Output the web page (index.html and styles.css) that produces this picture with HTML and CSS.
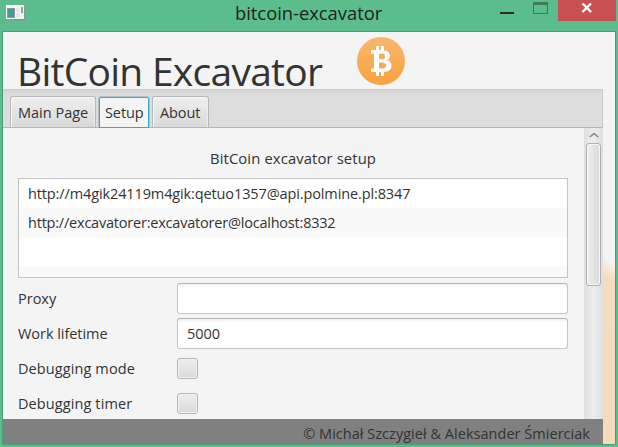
FILE: index.html
```html
<!DOCTYPE html>
<html lang="en">
<head>
<meta charset="utf-8">
<title>bitcoin-excavator</title>
<link rel="stylesheet" href="styles.css">
</head>
<body>
<div class="window">
  <header class="titlebar">
    <svg class="app-icon" width="19" height="16" viewBox="0 0 19 16">
      <rect x="0" y="1" width="19" height="14.500" fill="#7d9c8c"/>
      <rect x="0" y="0" width="18" height="14" fill="#f4f6f4"/>
      <rect x="1.500" y="3.500" width="7" height="9" fill="#4a9a8a" stroke="#8b96a8"/>
      <rect x="10" y="3" width="4" height="4" fill="#e6e8e6"/>
      <rect x="10" y="8" width="4" height="4" fill="#e6e8e6"/>
      <rect x="15" y="2" width="2" height="6" fill="#7fae9a"/>
    </svg>
    <h1 class="caption">bitcoin-excavator</h1>
    <div class="controls">
      <svg width="60" height="21" viewBox="0 0 60 21" shape-rendering="crispEdges">
        <rect x="2" y="12" width="14" height="2" fill="#2b2b2b"/>
        <path d="M35 2h15v12H35zM36 5v8h13V5z" fill="#41775c" fill-rule="evenodd"/>
      </svg>
      <div class="close">
        <svg width="12" height="10" viewBox="0 0 12 10"><path d="M1.500.5l8.500 8.500M10 .5L1.500 9" stroke="#fff" stroke-width="2.300"/></svg>
      </div>
    </div>
  </header>
  <main class="client">
    <div class="banner">
      <h2 class="brand">BitCoin Excavator</h2>
      <svg class="coin" width="48" height="48" viewBox="0 0 48 48">
        <defs><linearGradient id="orange" x1="0" y1="0" x2="0" y2="1"><stop offset="0" stop-color="#f9b76c"/><stop offset="1" stop-color="#f7a23e"/></linearGradient></defs>
        <circle cx="24" cy="24" r="24" fill="url(#orange)"/>
        <path fill="#fff" fill-rule="evenodd" d="M14 13h5V9h3v4h2V9h3v4.200c4 .6 6 2.600 6 5.600 0 2.200-1 3.600-2.700 4.500 2.700.8 4.200 2.500 4.200 5.200 0 4-2.900 6.200-7.500 6.500v4h-3v-4h-2v4h-3v-4h-5v-3.500h3V16.500h-3zM22 16.500v5.800h2.500c2.400 0 3.700-.9 3.700-2.900s-1.300-2.900-3.700-2.900zM22 25.500v6h3c2.700 0 4.200-.9 4.200-3s-1.500-3-4.200-3z"/>
      </svg>
    </div>
    <div class="body">
      <div class="pane">
        <nav class="tabs">
          <div class="tab main"><span>Main Page</span></div>
          <div class="tab setup selected"><span>Setup</span></div>
          <div class="tab about"><span>About</span></div>
        </nav>
        <div class="scroller">
          <section class="content">
            <h3 class="heading"><span>BitCoin excavator setup</span></h3>
            <ul class="list">
              <li><span class="url-a">http://m4gik24119m4gik:qetuo1357@api.polmine.pl:8347</span></li>
              <li><span class="url-b">http://excavatorer:excavatorer@localhost:8332</span></li>
              <li></li>
              <li></li>
            </ul>
            <div class="form">
              <label>Proxy</label><div class="field"></div>
              <label class="tight">Work lifetime</label><div class="field"><span>5000</span></div>
              <label class="loose">Debugging mode</label><div class="check"></div>
              <label class="loose">Debugging timer</label><div class="check"></div>
            </div>
          </section>
          <div class="scrollbar">
            <svg width="10" height="6" viewBox="0 0 10 6"><path d="M.8 5L5 1.500 9.200 5" fill="none" stroke="#808080" stroke-width="1.500"/></svg>
            <div class="thumb"></div>
          </div>
        </div>
        <footer class="footer"><span>© Michał Szczygieł &amp; Aleksander Śmierciak</span></footer>
      </div>
      <div class="backdrop"></div>
    </div>
  </main>
</div>
</body>
</html>
```
FILE: styles.css
```css
* { box-sizing: border-box; margin: 0; padding: 0; }
body {
  width: 618px; height: 447px; overflow: hidden;
  font: 14.5px/20px "Open Sans", "Noto Sans", sans-serif;
  color: #333; white-space: nowrap;
}
h1, h2, h3 { font-weight: 400; }
.window { width: 618px; height: 447px; background: #5bbd8d; padding: 0 2px; }
.titlebar { display: flex; height: 31px; }
.app-icon { flex: none; margin: 5px 0 0 4px; }
.caption {
  width: 150px; margin-left: 210px;
  font-size: 18.4px; line-height: 26px; letter-spacing: -0.03px; color: #222;
}
.controls { display: flex; margin-left: auto; }
.close { width: 58px; height: 21px; background: #c75050; padding: 3px 0 0 23px; }
.close svg, .controls svg { display: block; }
.client {
  display: flex; flex-direction: column;
  height: 414px; border: 1px solid #46a074; background: #f4f4f4;
}
.banner { display: flex; height: 57px; flex: none; padding-left: 14px; }
.brand { width: 306px; margin-right: 34px; font-size: 39px; line-height: 78px; letter-spacing: -0.74px; }
.coin { margin-top: 5px; }
.body { display: flex; flex: 1; }
.pane { width: 600px; display: flex; flex-direction: column; }
.tabs {
  display: flex; height: 39px; gap: 2px; padding: 7px 0 0 7px;
  background: linear-gradient(#cfcfcf, #ddd 5px);
  border-right: 1px solid #c8c8c8; border-bottom: 1px solid #b5b5b5;
}
.tab {
  height: 31px; padding: 6px 0 0 7px; line-height: 20px;
  border: 1px solid #b7b7b7; border-bottom: 0; border-radius: 3px 3px 0 0;
  background: linear-gradient(#efefef, #d9d9d9);
  box-shadow: inset 1px 1px #f8f8f8, inset -1px 0 #eee;
}
.main { width: 86px; }
.setup { width: 52px; padding-left: 6px; letter-spacing: -0.1px; }
.about { width: 57px; letter-spacing: -0.1px; }
.selected {
  height: 32px; background: #f4f4f4; border-color: #aebfc7;
  box-shadow: inset 0 0 0 1px #2eadd3;
}
.scroller { display: flex; height: 291px; overflow: hidden; }
.content { width: 581px; padding: 20px 16px 0 15px; }
.heading { height: 30px; font-size: 14.8px; line-height: 20px; letter-spacing: 0.12px; text-align: center; }
.list { height: 100px; border: 1px solid #c4c4c4; list-style: none; overflow: hidden; background: #fff; }
.list li { height: 29px; line-height: 29px; padding-left: 9px; }
.list li:nth-child(even) { background: #f9f9f9; }
.url-a { letter-spacing: -0.12px; }
.url-b { letter-spacing: -0.21px; }
.form {
  display: grid; grid-template-columns: 159px 391px; grid-auto-rows: 31px;
  row-gap: 4px; margin-top: 5px; align-items: center;
}
.tight { letter-spacing: -0.05px; }
.loose { letter-spacing: 0.1px; }
.field {
  height: 31px; padding-left: 9px; line-height: 30px;
  border: 1px solid #c5c5c5; border-top-color: #b4b4b4; border-radius: 3px;
  background: linear-gradient(#f0f0f0, #fff 4px);
}
.check {
  width: 21px; height: 21px; border: 1px solid #b5b5b5; border-radius: 3px;
  background: linear-gradient(#eee, #dadada); box-shadow: inset 0 0 0 1px #f1f1f1;
  margin-bottom: 1px;
}
.scrollbar { width: 19px; background: linear-gradient(90deg, #dfdfdf, #ededed 50%, #dfdfdf); padding-left: 2px; }
.scrollbar svg { display: block; margin: 4px 0 5px 3px; }
.thumb {
  width: 15px; height: 143px; border: 1px solid #b0b0b0; border-radius: 3px;
  background: linear-gradient(90deg, #efefef, #d9d9d9); box-shadow: inset 0 0 0 1px #f8f8f8;
}
.footer { height: 25px; background: #808080; line-height: 29px; letter-spacing: 0.03px; text-align: right; padding-right: 13px; }
.backdrop { flex: 1; background: linear-gradient(205deg, #f4f4f4 158px, #f6dcbe 174px, #f5dabb); }
```
